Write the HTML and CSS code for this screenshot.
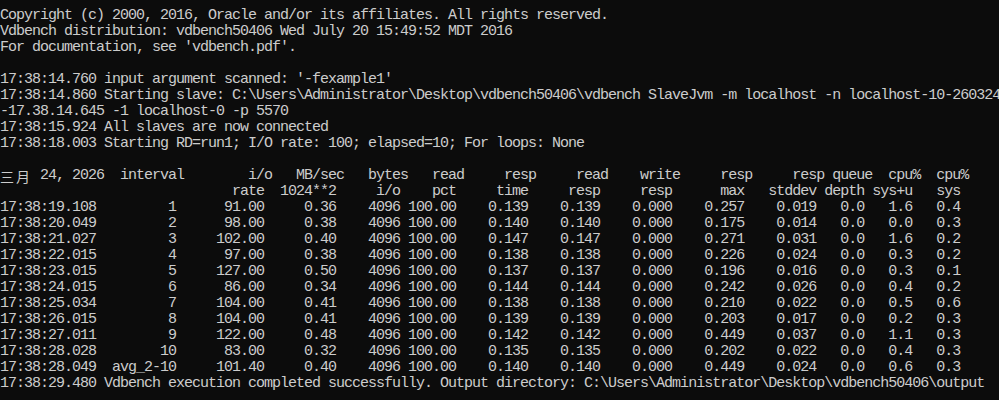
FILE: index.html
```html
<!DOCTYPE html>
<html lang="en">
<head>
<meta charset="utf-8">
<title>Command Prompt - vdbench</title>
<link rel="stylesheet" href="styles.css">
</head>
<body>
<pre class="console">Copyright (c) 2000, 2016, Oracle and/or its affiliates. All rights reserved.
Vdbench distribution: vdbench50406 Wed July 20 15:49:52 MDT 2016
For documentation, see 'vdbench.pdf'.

17:38:14.760 input argument scanned: '-fexample1'
17:38:14.860 Starting slave: C:\Users\Administrator\Desktop\vdbench50406\vdbench SlaveJvm -m localhost -n localhost-10-260324
-17.38.14.645 -1 localhost-0 -p 5570
17:38:15.924 All slaves are now connected
17:38:18.003 Starting RD=run1; I/O rate: 100; elapsed=10; For loops: None

<span class="cjk">三月</span> 24, 2026  interval        i/o   MB/sec   bytes   read     resp     read    write     resp     resp queue  cpu%  cpu%
                             rate  1024**2     i/o    pct     time     resp     resp      max   stddev depth sys+u   sys
17:38:19.108         1      91.00     0.36    4096 100.00    0.139    0.139    0.000    0.257    0.019   0.0   1.6   0.4
17:38:20.049         2      98.00     0.38    4096 100.00    0.140    0.140    0.000    0.175    0.014   0.0   0.0   0.3
17:38:21.027         3     102.00     0.40    4096 100.00    0.147    0.147    0.000    0.271    0.031   0.0   1.6   0.2
17:38:22.015         4      97.00     0.38    4096 100.00    0.138    0.138    0.000    0.226    0.024   0.0   0.3   0.2
17:38:23.015         5     127.00     0.50    4096 100.00    0.137    0.137    0.000    0.196    0.016   0.0   0.3   0.1
17:38:24.015         6      86.00     0.34    4096 100.00    0.144    0.144    0.000    0.242    0.026   0.0   0.4   0.2
17:38:25.034         7     104.00     0.41    4096 100.00    0.138    0.138    0.000    0.210    0.022   0.0   0.5   0.6
17:38:26.015         8     104.00     0.41    4096 100.00    0.139    0.139    0.000    0.203    0.017   0.0   0.2   0.3
17:38:27.011         9     122.00     0.48    4096 100.00    0.142    0.142    0.000    0.449    0.037   0.0   1.1   0.3
17:38:28.028        10      83.00     0.32    4096 100.00    0.135    0.135    0.000    0.202    0.022   0.0   0.4   0.3
17:38:28.049  avg_2-10     101.40     0.40    4096 100.00    0.140    0.140    0.000    0.449    0.024   0.0   0.6   0.3
17:38:29.480 Vdbench execution completed successfully. Output directory: C:\Users\Administrator\Desktop\vdbench50406\output</pre>
</body>
</html>
```
FILE: styles.css
```css
html, body {
  margin: 0;
  padding: 0;
  background: #0c0c0c;
  width: 999px;
  height: 400px;
  overflow: hidden;
}

.console {
  margin: 0;
  padding: 8px 0 0 0;
  font-family: "Liberation Mono", "DejaVu Sans Mono", monospace;
  font-size: 15px;
  letter-spacing: -1px;
  line-height: 16px;
  color: #cccccc;
  white-space: pre;
  overflow: hidden;
  height: 392px;
}

.cjk {
  display: inline-block;
  width: 32px;
  height: 16px;
  vertical-align: top;
  font-family: "Noto Sans CJK SC", sans-serif;
  font-size: 14px;
  letter-spacing: 2px;
  line-height: 16px;
}
```
